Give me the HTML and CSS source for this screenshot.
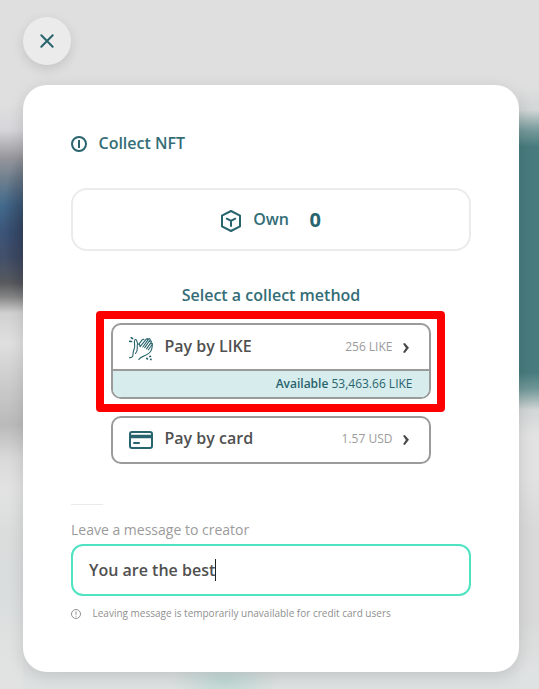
FILE: index.html
```html
<!DOCTYPE html>
<html lang="en">
<head>
<meta charset="utf-8">
<title>Collect NFT</title>
<link rel="stylesheet" href="styles.css">
</head>
<body>
<button class="close" aria-label="Close">
  <svg width="16" height="16" viewBox="0 0 16 16" fill="none" stroke="currentColor" stroke-width="2" stroke-linecap="round"><path d="M2.300 2.300l11.400 11.400M13.700 2.300L2.300 13.700"/></svg>
</button>
<main class="dialog">
  <header class="title">
    <svg width="16" height="16" viewBox="0 0 16 16" fill="none" stroke="currentColor" stroke-width="2"><circle cx="8" cy="8" r="7"/><path d="M8 4v8"/></svg>
    <h1>Collect NFT</h1>
  </header>
  <section class="own">
    <svg width="20" height="22" viewBox="0 0 20 22" fill="none" stroke="currentColor" stroke-width="2" stroke-linecap="round" stroke-linejoin="round"><path d="M10 1l9 4.600v10.800L10 21l-9-4.600V5.600z"/><path d="M5.800 8.700L10 10.800l4.200-2.100M10 10.800v5.200"/></svg>
    <span class="own-label">Own</span>
    <strong class="own-count">0</strong>
  </section>
  <h2 class="subtitle">Select a collect method</h2>
  <div class="methods">
    <div class="highlighted">
      <button class="method">
        <span class="method-row">
          <svg class="method-icon" width="24" height="24" viewBox="0 0 24 24" fill="none" stroke="currentColor" stroke-width="1.100" stroke-linecap="round" stroke-linejoin="round">
            <path d="M.6 20.600c2.200.1 3.400-1 3.400-3.200 0-3 .9-4.600 1.500-6.600.7-2.600-.8-5.800.3-7.800.5-.8 1.500-.5 1.800.4l1.200 4"/>
            <path d="M9.800 22.600c1.300-2.600 3.800-3 6.200-4 3-1.300 5.500-3.300 6.500-6 .6-1.800.9-3.400.8-5.600"/>
            <path d="M6.500 16.500c1.500-2 2-3.600 1.800-5.800-.2-1.600-.4-2.800.4-3.500.8-.6 1.700-.1 2 .8l.4 1.600 6.200-7.400c1-1.100 2.200-.2 1.500 1l-5 6.800"/>
            <path d="M18.600 3.200l.8-1c1-1.100 2.200-.2 1.500 1l-5.200 7.400M20.600 4.400c1-1.100 2.200-.2 1.500 1l-4.600 6.500M22 6.600c1-.8 1.700-.2 1.200.9l-3.800 5.300M10.500 6.300l2.800-3.600c.6-.7 1.500-.6 1.700.1"/>
            <path d="M2.300.8l1.300.8M.7 4.300l1.800.2M17.800 21.300l.6.600M20.900 19.500l.5-.2M21.700 22.400h.3" stroke-width="1.700"/>
          </svg>
          <span class="method-name">Pay by LIKE</span>
          <span class="method-price">256 LIKE</span>
          <svg class="chevron" width="6" height="10" viewBox="0 0 6 10"><path d="M0 .8L1.800 0 6 4.800 1.800 10 0 9.200 2.900 5z" fill="currentColor"/></svg>
        </span>
        <span class="balance"><b>Available</b> 53,463.66 LIKE</span>
      </button>
    </div>
    <button class="method method-card">
      <span class="method-row">
        <svg class="method-icon" width="24" height="24" viewBox="0 0 24 24" fill="none" stroke="currentColor" stroke-width="2"><rect x="1" y="4" width="22" height="16" rx="2"/><path d="M1 8.500h22" stroke-width="3.400"/><path d="M5 15h5" stroke-linecap="round"/></svg>
        <span class="method-name">Pay by card</span>
        <span class="method-price">1.57 USD</span>
        <svg class="chevron" width="6" height="10" viewBox="0 0 6 10"><path d="M0 .8L1.800 0 6 4.800 1.800 10 0 9.200 2.900 5z" fill="currentColor"/></svg>
      </span>
    </button>
  </div>
  <hr class="divider">
  <div class="message-label">Leave a message to creator</div>
  <div class="message-field"><span>You are the best</span><i class="caret"></i></div>
  <div class="note">
    <svg width="10" height="10" viewBox="0 0 10 10" fill="none" stroke="currentColor"><circle cx="5" cy="5" r="4.500"/><path d="M5 2.300v3.400M5 6.700v1"/></svg>
    <span>Leaving message is temporarily unavailable for credit card users</span>
  </div>
</main>
</body>
</html>
```

FILE: styles.css
```css
* { box-sizing: border-box; }

body {
  margin: 0;
  min-height: 689px;
  padding: 17px 20px 17px 23px;
  overflow: hidden;
  font-family: "Open Sans", sans-serif;
  color: #28646e;
  background:
    radial-gradient(ellipse 55px 22px at 225px 681px, #bfd8d4, transparent) no-repeat,
    radial-gradient(ellipse 22px 75px at 24px 228px, rgba(38, 42, 66, .5), transparent) no-repeat,
    linear-gradient(#dfdfdf 105px, #d6d6da 130px, #96969c 158px, #71818f 178px, #436a8c 205px, #3c567a 232px, #43506a 258px, #575a5d 283px, #858585 297px, #d1d1d1 313px, #dedfde 343px, #cbcbcb 385px, #bababa 425px, #d9d9d9 458px, #e2e2e2 488px, #dadcdc 540px, #d9dddd 590px, #dfe1e1 635px, #e2e2e2) 0 0 / 23px 689px no-repeat,
    linear-gradient(#dfdfdf 85px, #d2d6d6 110px, #789a9b 130px, #477b7d 147px, #477b7d 372px, #719798 389px, #d2d6d6 410px, #e2e2e2 435px, #e2e2e2 475px, #d9d9d9 530px, #d9d9d9 620px, #dfe2e2 670px) 100% 0 / 20px 689px no-repeat,
    linear-gradient(#dfdfdf 600px, #dde1e1);
}

h1, h2 { margin: 0; font-size: 16px; font-weight: 600; }
button { font: inherit; color: inherit; padding: 0; }

.close {
  display: flex;
  align-items: center;
  justify-content: center;
  width: 48px;
  height: 48px;
  border: 0;
  border-radius: 50%;
  background: #ebebeb;
  box-shadow: 0 4px 12px rgba(0, 0, 0, .12);
}

.dialog {
  width: 496px;
  height: 587px;
  margin-top: 20px;
  padding: 48px;
  border-radius: 24px;
  background: #fff;
  box-shadow: 0 4px 16px rgba(0, 0, 0, .13);
}

.title { display: flex; align-items: center; gap: 11.5px; height: 20px; }
.title svg { margin-top: 2px; }
.title h1, .subtitle, .own-label { color: #346d77; }

.own {
  display: flex;
  align-items: center;
  justify-content: center;
  height: 63px;
  margin-top: 35px;
  border: 2px solid #ebebeb;
  border-radius: 16px;
}
.own svg { margin-top: 2px; }
.own-label { margin: 0 0 2px 12px; font-size: 16px; font-weight: 600; }
.own-count { margin-left: 20.5px; font-size: 20px; }

.subtitle { margin-top: 32px; line-height: 24px; text-align: center; }

.methods { width: 320px; margin: 16px auto 0; }
.highlighted { position: relative; margin-bottom: 17px; }
.highlighted::after {
  content: "";
  position: absolute;
  inset: -12px -14px -13px -15px;
  border: 8px solid #f00;
  border-radius: 4px;
}

.method {
  display: block;
  width: 100%;
  overflow: hidden;
  border: 2px solid #9b9b9b;
  border-radius: 10px;
  background: #fff;
}
.method-row { display: flex; align-items: center; height: 44px; padding: 0 20.5px 2px 16px; }
.method-card .method-row { padding-bottom: 4px; }
.method-icon { margin-top: 5px; }
.method-card .method-icon { margin-top: 4px; }
.method-name { flex: 1; margin-left: 11.5px; text-align: left; font-size: 16px; font-weight: 600; color: #505050; }
.method-price { font-size: 12px; color: #9b9b9b; }
.chevron { margin: 4px 0 0 10px; color: #4a4a4a; }
.balance {
  display: block;
  height: 28px;
  padding-right: 16.5px;
  border-top: 2px solid #9b9b9b;
  background: #d7ecec;
  font-size: 12px;
  line-height: 25px;
  text-align: right;
}
.balance b { font-weight: 600; }

.divider { width: 32px; height: 1px; margin: 40px 0 0; border: 0; background: #ebebeb; }
.message-label { margin-top: 14px; font-size: 14px; line-height: 22px; color: #9b9b9b; }
.message-field {
  display: flex;
  align-items: center;
  height: 52px;
  margin-top: 3px;
  padding: 0 16px;
  border: 2px solid #50e3c2;
  border-radius: 12px;
  font-size: 16px;
  font-weight: 600;
  color: #505050;
}
.caret { width: 1px; height: 22px; background: #222; }
.note { display: flex; align-items: center; gap: 11.5px; margin-top: 10px; font-size: 10px; line-height: 14px; color: #909090; }
.note span { margin-bottom: 1px; }
```
